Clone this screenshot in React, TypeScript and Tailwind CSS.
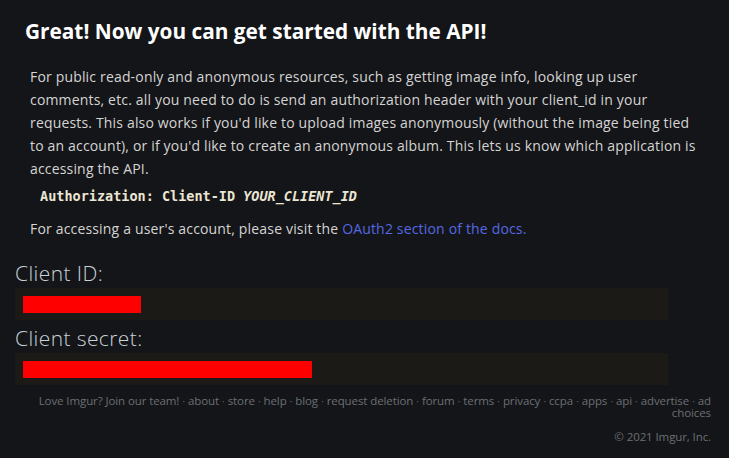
const links = [
  "Love Imgur? Join our team!",
  "about",
  "store",
  "help",
  "blog",
  "request deletion",
  "forum",
  "terms",
  "privacy",
  "ccpa",
  "apps",
  "api",
  "advertise",
  "ad choices",
];

function SecretField({ label, barWidth }: { label: string; barWidth: string }) {
  return (
    <div>
      <h3 className="text-[21px] font-light leading-[26px] tracking-[0.4px] text-[#c9d1d9]">{label}</h3>
      <div className="mt-[2px] h-[32px] w-[653px] bg-[#1b1a17] px-[8px] py-[8px]">
        <div className={`h-[17px] bg-[#ff0000] ${barWidth}`} />
      </div>
    </div>
  );
}

export default function App() {
  return (
    <div className="min-h-[458px] w-full bg-[#141518] font-['Open_Sans',sans-serif] text-[#d4d4d4]">
      <div className="px-[15px] pt-[16px]">
        <h2 className="pl-[10px] text-[20.8px] font-bold leading-[30px] text-white">
          Great! Now you can get started with the API!
        </h2>

        <div className="mt-[19px] pl-[15px] text-[14px] leading-[23px] tracking-[0.17px]">
          <p className="w-[670px]">
            For public read-only and anonymous resources, such as getting image info, looking up user
            comments, etc. all you need to do is send an authorization header with your client_id in your
            requests. This also works if you'd like to upload images anonymously (without the image being tied
            to an account), or if you'd like to create an anonymous album. This lets us know which application is
            accessing the API.
          </p>
          <pre className="mt-[6px] pl-[10px] font-['DejaVu_Sans_Mono',monospace] text-[13.5px] font-bold leading-[20px] tracking-normal text-[#ece6d4]">
            Authorization: Client-ID <i>YOUR_CLIENT_ID</i>
          </pre>
          <p className="mt-[11px]">
            For accessing a user's account, please visit the{" "}
            <a className="text-[#5468e4]">OAuth2 section of the docs.</a>
          </p>
        </div>

        <div className="mt-[20px] flex flex-col gap-[5px]">
          <SecretField label="Client ID:" barWidth="w-[118px]" />
          <SecretField label="Client secret:" barWidth="w-[289px]" />
        </div>

        <div className="mt-[10px] pr-[3px] text-right text-[11.5px] leading-[12px] tracking-[-0.1px] text-[#6b6f74]">
          <div className="ml-auto w-[690px]">
            {links.map((l, i) => (
              <span key={l}>
                {i > 0 && <span className="text-[#55585c]"> · </span>}
                {l}
              </span>
            ))}
          </div>
          <div className="mt-[12px]">© 2021 Imgur, Inc.</div>
        </div>
      </div>
    </div>
  );
}
